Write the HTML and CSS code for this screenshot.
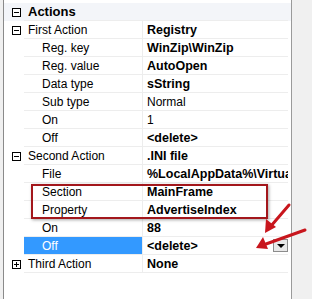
FILE: index.html
```html
<!DOCTYPE html>
<html lang="en">
<head>
    <meta charset="UTF-8">
    <title>Actions</title>
    <link rel="stylesheet" href="styles.css">
</head>
<body>
    <div class="panel">
        <div class="fila categoria raiz">
            <span class="caja"><svg width="9" height="9" viewBox="0 0 9 9"><rect x="0.5" y="0.5" width="8" height="8" fill="#fff" stroke="#000"/><path d="M2 4.5h5" stroke="#000"/></svg></span>
            <span class="nombre">Actions</span>
            <span class="valor"></span>
        </div>

        <div class="fila categoria">
            <span class="caja"><svg width="9" height="9" viewBox="0 0 9 9"><rect x="0.5" y="0.5" width="8" height="8" fill="#fff" stroke="#000"/><path d="M2 4.5h5" stroke="#000"/></svg></span>
            <span class="nombre">First Action</span>
            <span class="valor">Registry</span>
        </div>
        <div class="fila"><span></span><span class="nombre">Reg. key</span><span class="valor">WinZip\WinZip</span></div>
        <div class="fila"><span></span><span class="nombre">Reg. value</span><span class="valor">AutoOpen</span></div>
        <div class="fila"><span></span><span class="nombre">Data type</span><span class="valor">sString</span></div>
        <div class="fila"><span></span><span class="nombre">Sub type</span><span class="valor normal">Normal</span></div>
        <div class="fila"><span></span><span class="nombre">On</span><span class="valor normal">1</span></div>
        <div class="fila"><span></span><span class="nombre">Off</span><span class="valor">&lt;delete&gt;</span></div>

        <div class="fila categoria">
            <span class="caja"><svg width="9" height="9" viewBox="0 0 9 9"><rect x="0.5" y="0.5" width="8" height="8" fill="#fff" stroke="#000"/><path d="M2 4.5h5" stroke="#000"/></svg></span>
            <span class="nombre">Second Action</span>
            <span class="valor">.INI file</span>
        </div>
        <div class="fila"><span></span><span class="nombre">File</span><span class="valor">%LocalAppData%\VirtualStore</span></div>
        <div class="fila"><span></span><span class="nombre">Section</span><span class="valor">MainFrame</span></div>
        <div class="fila"><span></span><span class="nombre">Property</span><span class="valor">AdvertiseIndex</span></div>
        <div class="fila"><span></span><span class="nombre">On</span><span class="valor">88</span></div>
        <div class="fila seleccionada">
            <span></span>
            <span class="nombre">Off</span>
            <span class="valor">&lt;delete&gt;<span class="boton-lista"></span></span>
        </div>

        <div class="fila categoria">
            <span class="caja"><svg width="9" height="9" viewBox="0 0 9 9"><rect x="0.5" y="0.5" width="8" height="8" fill="#fff" stroke="#000"/><path d="M2 4.5h5M4.5 2v5" stroke="#000"/></svg></span>
            <span class="nombre">Third Action</span>
            <span class="valor">None</span>
        </div>

        <!-- marcas rojas encima de la tabla -->
        <div class="recuadro"></div>
        <svg class="flechas" width="312" height="299" viewBox="0 0 312 299">
            <g stroke="#c8161d" stroke-width="3" stroke-linecap="round" fill="#c8161d">
                <line x1="289" y1="205" x2="271" y2="226"/>
                <polygon points="265,233 266,219 276,227" stroke="none"/>
                <line x1="305" y1="230" x2="266" y2="244"/>
                <polygon points="256,248 263,237 268,249" stroke="none"/>
            </g>
        </svg>
    </div>
</body>
</html>
```

FILE: styles.css
```css
body {
    margin: 0;
    width: 312px;
    height: 299px;
    background: #f0f0f0;
    font-family: "Liberation Sans", Arial, sans-serif;
    font-size: 12px;
    color: #000;
    overflow: hidden;
}

.panel {
    position: relative;
    width: 287px;
    height: 296px;
    padding-top: 3px;
    margin-left: 3px;
    background: #fff;
    border-left: 1px solid #8a8a8a;
    border-right: 1px solid #9a9a9a;
}

.fila {
    display: grid;
    grid-template-columns: 20px 118px 1fr;
    height: 18px;
    align-items: center;
}

.fila > span {
    height: 18px;
    display: flex;
    align-items: center;
    box-sizing: border-box;
}

.nombre {
    padding-left: 18px;
    border-bottom: 1px solid #ededed;
    white-space: nowrap;
}

.valor {
    padding-left: 4px;
    font-size: 12.5px;
    font-weight: bold;
    border-left: 1px solid #ededed;
    border-bottom: 1px solid #ededed;
    white-space: nowrap;
    overflow: hidden;
    position: relative;
    margin-right: 3px;
}

.valor.normal {
    font-size: 12px;
    font-weight: normal;
}

.categoria .nombre {
    padding-left: 4px;
}

.raiz {
    background: #f3f5f9;
}

.raiz .nombre {
    font-weight: bold;
    font-size: 13px;
}

.raiz .valor {
    border-left: none;
}

.caja {
    padding-left: 8px;
}

.seleccionada .nombre {
    background: #3399ff;
    color: #fff;
}

.boton-lista {
    position: absolute;
    right: 0;
    top: 2px;
    width: 15px;
    height: 13px;
    box-sizing: border-box;
    border: 1px solid #8c8c8c;
    background: #e8e8e8;
}

.boton-lista::after {
    content: "";
    position: absolute;
    left: 3px;
    top: 4px;
    border-left: 4px solid transparent;
    border-right: 4px solid transparent;
    border-top: 4px solid #000;
}

.recuadro {
    position: absolute;
    left: 27px;
    top: 184px;
    width: 233px;
    height: 31px;
    border: 2px solid #a3171c;
    box-shadow: 1px 1px 3px rgba(0, 0, 0, 0.35);
    pointer-events: none;
}

.flechas {
    position: absolute;
    left: -4px;
    top: 0;
    pointer-events: none;
}
```
